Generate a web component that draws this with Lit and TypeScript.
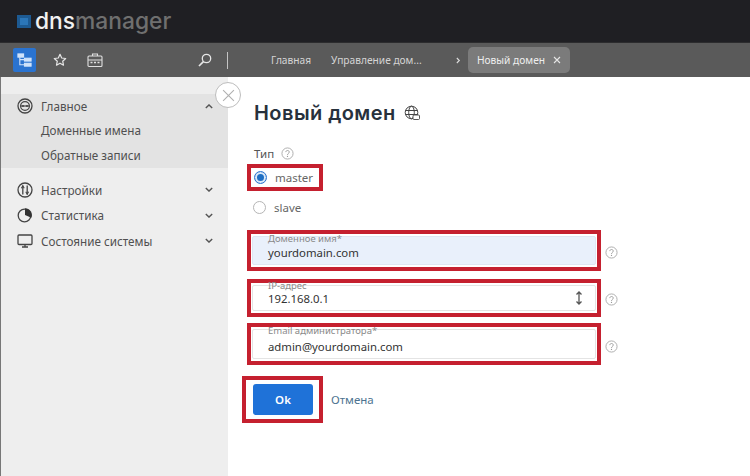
import { LitElement, css, html, svg } from 'lit';
import { customElement } from 'lit/decorators.js';

const chevron = (up: boolean) => html`<svg class="chev" viewBox="0 0 10 6" width="8" height="5">
  <path d=${up ? 'M1 5l4-4 4 4' : 'M1 1l4 4 4-4'} fill="none" stroke="#555" stroke-width="1.7"/>
</svg>`;

const help = html`<svg class="help" viewBox="0 0 14 14" width="13" height="13">
  <circle cx="7" cy="7" r="6" fill="none" stroke="#aaa" stroke-width="1"/>
  <path d="M5.2 5.5c0-2.3 3.700-2.300 3.700 0 0 1.400-1.900 1.400-1.900 3" fill="none" stroke="#999" stroke-width="1"/>
  <circle cx="7" cy="10.200" r=".7" fill="#999"/>
</svg>`;

const icons = {
  main: svg`<circle cx="8" cy="8" r="7" fill="none" stroke="#444" stroke-width="1.3"/><circle cx="8" cy="8" r="4.4" fill="none" stroke="#444" stroke-width="1.2"/><path d="M3.5 8h9" stroke="#444" stroke-width="1.2"/><circle cx="6" cy="8" r="1" fill="#444"/><circle cx="10" cy="8" r="1" fill="#444"/>`,
  settings: svg`<circle cx="8" cy="8" r="7" fill="none" stroke="#444" stroke-width="1.3"/><path d="M5.8 3.500v9M10.200 3.500v9" stroke="#444" stroke-width="1.3"/><path d="M4.400 6.200l1.400-2.400 1.400 2.400M8.800 9.800l1.400 2.400 1.400-2.400" fill="none" stroke="#444" stroke-width="1.100"/>`,
  stats: svg`<circle cx="7.500" cy="8.500" r="6.300" fill="none" stroke="#444" stroke-width="1.300"/><path d="M8 1.200a7 7 0 0 1 6.400 9.600L8 8z" fill="#333"/>`,
  system: svg`<rect x="1" y="2" width="14" height="9.500" rx="1" fill="none" stroke="#444" stroke-width="1.300"/><path d="M5 14h6M8 11.500V14" stroke="#444" stroke-width="1.300"/>`,
};

@customElement('app-root')
export class AppRoot extends LitElement {
  static styles = css`
    :host {
      display: flex;
      flex-direction: column;
      width: 750px;
      height: 476px;
      overflow: hidden;
      position: relative;
      background: #fff;
      font-family: 'Noto Sans', 'Open Sans', sans-serif;
      color: #444;
    }

    .top {
      height: 43px;
      flex: none;
      background: #1f1f23;
      display: flex;
      align-items: center;
      padding-left: 17px;
      gap: 4px;
      box-sizing: border-box;
      border-bottom: 1px solid #2c2c2e;
    }
    .logo-mark {
      width: 14px;
      height: 13px;
      box-sizing: border-box;
      background: #2b76b8;
      border: 3px solid #1d5a92;
      margin-top: 1px;
    }
    .logo-text {
      font-family: 'Inter', sans-serif;
      font-size: 22.8px;
      font-weight: 500;
      color: #6f6f6f;
      line-height: 1;
    }
    .logo-text b {
      font-weight: 500;
      color: #f1f1f1;
    }

    .tools {
      height: 34px;
      flex: none;
      background: #5a5a5a;
      display: flex;
      align-items: center;
      color: #d4d4d4;
      font-size: 10.2px;
    }
    .tool-active {
      width: 23px;
      height: 24px;
      margin-left: 13px;
      background: #2a73d0;
      border-radius: 2px;
      display: flex;
      align-items: center;
      justify-content: center;
    }
    .star { margin-left: 17px; }
    .case { margin-left: 20px; }
    .search { margin-left: 95px; }
    .sep {
      width: 1px;
      height: 17px;
      background: #c4c4c4;
      margin-left: 15px;
    }
    .crumb-a { margin-left: 43px; width: 38px; white-space: nowrap; }
    .crumb-b { margin-left: 22px; width: 92px; white-space: nowrap; }
    .crumb-arrow { margin-left: 33px; }
    .tab {
      margin-left: 7px;
      width: 102px;
      height: 26px;
      box-sizing: border-box;
      padding: 0 9px;
      background: #7b7b7b;
      border-radius: 5px;
      display: flex;
      align-items: center;
      justify-content: space-between;
      color: #eee;
      white-space: nowrap;
    }

    .body {
      flex: 1;
      display: flex;
      min-height: 0;
    }
    aside {
      width: 228px;
      flex: none;
      background: #eeeeee;
      padding-top: 17px;
      box-sizing: border-box;
      border-left: 1px solid #777;
      font-size: 11.7px;
      color: #505050;
    }
    .group-open {
      background: #e3e3e3;
      height: 74px;
      margin-bottom: 9px;
    }
    .row {
      display: flex;
      align-items: center;
      height: 25.5px;
      padding: 0 15px 0 16px;
    }
    .row svg.ico {
      width: 16px;
      height: 16px;
      margin-right: 8px;
      flex: none;
    }
    .row span { flex: 1; }
    .group-open .row { height: 24px; }
    .sub {
      height: 24.5px;
      line-height: 24.5px;
      padding-left: 40px;
    }
    .chev { flex: none; }

    .collapse {
      position: absolute;
      left: 215px;
      top: 82px;
      width: 26px;
      height: 26px;
      box-sizing: border-box;
      border-radius: 50%;
      border: 1px solid #bdbdbd;
      background: #fff;
      display: flex;
      align-items: center;
      justify-content: center;
    }

    main {
      flex: 1;
      padding: 22px 0 0 19px;
      font-size: 11.5px;
    }
    h1 {
      margin: 0 0 0 7px;
      height: 28px;
      display: flex;
      align-items: center;
      gap: 8px;
      font-family: 'Inter', sans-serif;
      font-size: 20px;
      font-weight: 600;
      letter-spacing: 0.45px;
      color: #27313c;
    }
    .type {
      margin: 18px 0 0 7px;
      height: 16px;
      display: flex;
      align-items: center;
      gap: 7px;
      color: #555;
    }
    .mark {
      border: 4px solid #c5202f;
      box-sizing: border-box;
    }
    .radio-row {
      display: flex;
      align-items: center;
      gap: 8px;
      color: #666;
    }
    .master {
      width: 76px;
      height: 27px;
      margin-top: 3px;
      padding-left: 3px;
    }
    .slave {
      height: 20px;
      margin: 6px 0 13px 6px;
    }
    .radio {
      width: 13px;
      height: 13px;
      box-sizing: border-box;
      border-radius: 50%;
      border: 1px solid #b5b5b5;
      background: #fff;
    }
    .radio.on {
      border: 1px solid #2a73d0;
      box-shadow: inset 0 0 0 2px #dbe9f8, inset 0 0 0 7px #1f6fc4;
    }

    .field-row {
      display: flex;
      align-items: center;
      gap: 4px;
    }
    .field-row .mark { width: 354px; padding: 2px 1px; }
    .field-row .help { margin-top: 4px; }
    .field-row.ip-row .help { margin-top: 2px; }
    .field {
      height: 100%;
      box-sizing: border-box;
      border: 1px solid #e4e4e4;
      border-radius: 2px;
      padding: 0 12px 0 15px;
      display: flex;
      align-items: center;
      justify-content: space-between;
      color: #333;
      font-size: 11.35px;
      line-height: 13px;
      position: relative;
    }
    .field.filled { background: #e9f0fb; border-color: #dfe6f2; }
    .field label {
      position: absolute;
      left: 15px;
      top: -5px;
      font-size: 9.5px;
      line-height: 10px;
      color: #8a8a8a;
      white-space: nowrap;
    }
    .domain .field label { top: -3px; }
    .email .field label { top: -4px; }
    .domain .field, .email .field { padding-top: 4px; }
    .field-row .domain { height: 41px; }
    .field-row .ip { height: 38px; }
    .field-row .email { height: 42px; }
    .gap-8 { margin-top: 8px; }
    .gap-6 { margin-top: 6px; }

    .actions {
      display: flex;
      align-items: center;
      margin: 11px 0 0 -5px;
    }
    .ok-box {
      width: 81px;
      height: 47px;
      box-sizing: border-box;
      padding-left: 7px;
      display: flex;
      align-items: center;
    }
    button {
      width: 60px;
      height: 31px;
      border: none;
      border-radius: 3px;
      background: #1f72d8;
      color: #fff;
      font: 600 11.5px 'Noto Sans', sans-serif;
    }
    .cancel {
      margin-left: 8px;
      color: #4d7390;
    }
  `;

  render() {
    return html`
      <div class="top">
        <div class="logo-mark"></div>
        <div class="logo-text"><b>dns</b>manager</div>
      </div>
      <div class="tools">
        <div class="tool-active">
          <svg viewBox="0 0 16 16" width="15" height="15" fill="none" stroke="#cfe2fa" stroke-width="1.2">
            <rect x="1" y="1" width="6" height="3.4" fill="#cfe2fa"/>
            <rect x="8" y="5.6" width="7" height="3" fill="#cfe2fa"/>
            <rect x="8" y="11" width="7" height="3" fill="#cfe2fa"/>
            <path d="M3 4.4V12.5H8M3 7h5"/>
          </svg>
        </div>
        <svg class="star" viewBox="0 0 14 14" width="14" height="14">
          <path d="M7 1.3l1.7 3.7 4 .5-3 2.7.8 4L7 10.2l-3.5 2 .8-4-3-2.7 4-.5z" fill="none" stroke="#e6e6e6" stroke-width="1.2" stroke-linejoin="round"/>
        </svg>
        <svg class="case" viewBox="0 0 16 16" width="16" height="16" fill="none" stroke="#e0e0e0" stroke-width="1.1">
          <rect x="1" y="4" width="14" height="10.5" rx="1"/>
          <path d="M5.5 4V2h5v2M1 8h14"/>
          <path d="M3.5 10.5h2M7 10.5h2M10.5 10.5h2" stroke-width="1.3"/>
        </svg>
        <svg class="search" viewBox="0 0 14 14" width="14" height="14" fill="none" stroke="#e6e6e6" stroke-width="1.3">
          <circle cx="8.5" cy="5.5" r="4.2"/>
          <path d="M5.4 8.6L1 13" stroke-width="1.7"/>
        </svg>
        <div class="sep"></div>
        <span class="crumb-a">Главная</span>
        <span class="crumb-b">Управление дом...</span>
        <svg class="crumb-arrow" viewBox="0 0 6 8" width="5" height="7">
          <path d="M1 1l3 3-3 3" fill="none" stroke="#ddd" stroke-width="1.3"/>
        </svg>
        <div class="tab">
          <span>Новый домен</span>
          <svg viewBox="0 0 8 8" width="8" height="8"><path d="M1 1l6 6M7 1L1 7" stroke="#e6e6e6" stroke-width="1.1"/></svg>
        </div>
      </div>
      <div class="body">
        <aside>
          <div class="group-open">
            <div class="row"><svg class="ico" viewBox="0 0 16 16">${icons.main}</svg><span>Главное</span>${chevron(true)}</div>
            <div class="sub">Доменные имена</div>
            <div class="sub">Обратные записи</div>
          </div>
          <div class="row"><svg class="ico" viewBox="0 0 16 16">${icons.settings}</svg><span>Настройки</span>${chevron(false)}</div>
          <div class="row"><svg class="ico" viewBox="0 0 16 16">${icons.stats}</svg><span>Статистика</span>${chevron(false)}</div>
          <div class="row"><svg class="ico" viewBox="0 0 16 16">${icons.system}</svg><span>Состояние системы</span>${chevron(false)}</div>
        </aside>
        <main>
          <h1>
            Новый домен
            <svg viewBox="0 0 16 16" width="16" height="16" fill="none" stroke="#444" stroke-width="1">
              <circle cx="7.5" cy="7.5" r="6.3"/>
              <ellipse cx="7.5" cy="7.5" rx="2.8" ry="6.3"/>
              <path d="M1.5 5.5h12M1.5 9.500h12"/>
              <rect x="9" y="10" width="6.5" height="4.5" rx="1" fill="#fff" stroke-width=".9"/>
            </svg>
          </h1>
          <div class="type">Тип ${help}</div>
          <div class="mark master radio-row"><div class="radio on"></div>master</div>
          <div class="radio-row slave"><div class="radio"></div>slave</div>
          <div class="field-row">
            <div class="mark domain">
              <div class="field filled"><label>Доменное имя*</label><span>yourdomain.com</span></div>
            </div>
            ${help}
          </div>
          <div class="field-row ip-row gap-8">
            <div class="mark ip">
              <div class="field">
                <label>IP-адрес</label><span>192.168.0.1</span>
                <svg viewBox="0 0 8 14" width="8" height="14"><path d="M4 1v12M1.5 3.5L4 1l2.500 2.500M1.5 10.500L4 13l2.500-2.500" fill="none" stroke="#555" stroke-width="1.3"/></svg>
              </div>
            </div>
            ${help}
          </div>
          <div class="field-row gap-6">
            <div class="mark email">
              <div class="field"><label>Email администратора*</label><span>admin@yourdomain.com</span></div>
            </div>
            ${help}
          </div>
          <div class="actions">
            <div class="mark ok-box"><button>Ok</button></div>
            <span class="cancel">Отмена</span>
          </div>
        </main>
      </div>
      <div class="collapse">
        <svg viewBox="0 0 12 12" width="13" height="13"><path d="M1 1l10 10M11 1L1 11" stroke="#b0b0b0" stroke-width="1"/></svg>
      </div>
    `;
  }
}
